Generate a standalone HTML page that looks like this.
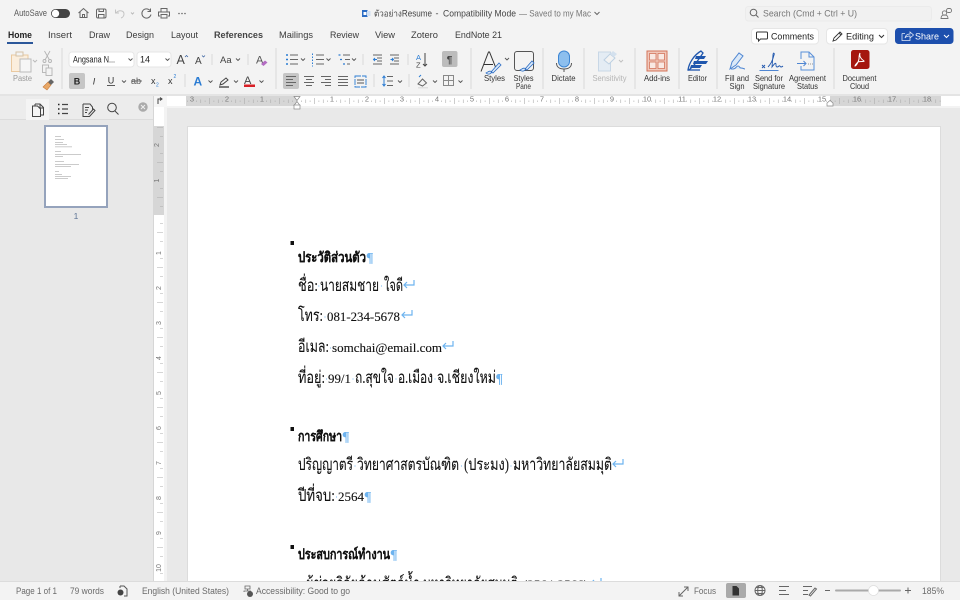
<!DOCTYPE html>
<html lang="th"><head><meta charset="utf-8"><title>Word</title>
<style>
html,body{margin:0;padding:0;background:#f3f3f3;width:960px;height:600px;overflow:hidden}
#root{position:relative;width:960px;height:600px;overflow:hidden;filter:blur(.3px)}
svg{position:absolute;left:0;top:0}
text{font-family:"Liberation Sans",sans-serif}
.s text,text.s{font-family:"Liberation Serif","Noto Serif CJK SC",serif}
</style></head><body><div id="root">
<svg width="960" height="600" viewBox="0 0 960 600">
<defs>
<pattern id="hr" x="297" y="96" width="35" height="10" patternUnits="userSpaceOnUse"><path d="M4.400 4.500v1.500M8.750 3.500v3.500M13.100 4.500v1.500M17.500 2v6M21.900 4.500v1.500M26.250 3.500v3.500M30.600 4.500v1.500" stroke="#acacac" stroke-width=".6" fill="none"/></pattern>
<pattern id="vr" x="153" y="215" width="11" height="35" patternUnits="userSpaceOnUse"><path d="M7 8.750h3M4 17.500h6M7 26.250h3" stroke="#acacac" stroke-width=".6" fill="none"/></pattern>
<path id="ret" d="M10.500 0v5H.5M3.500 2L.5 5l3 3" fill="none" stroke="#6db3ef" stroke-width="1.200"/>
</defs>
<rect width="960" height="600" fill="#f3f3f3"/>
<!-- sidebar -->
<rect x="0" y="95" width="153" height="487" fill="#e8e8e8"/>
<rect x="0" y="95" width="153" height="24" fill="#ececec"/>
<path d="M0 119.500H153" stroke="#dcdcdc"/>
<rect x="26" y="99" width="23" height="21" fill="#f4f4f4"/>
<rect x="153" y="95" width="1" height="487" fill="#d6d6d6"/>
<!-- rulers & doc bg -->
<rect x="154" y="95" width="806" height="487" fill="#f3f3f3"/>
<rect x="167" y="108" width="793" height="474" fill="#e9e9e9"/>
<rect x="154" y="96" width="806" height="10" fill="#fff"/>
<rect x="186" y="96" width="111" height="10" fill="#d6d6d6"/>
<rect x="830" y="96" width="111" height="10" fill="#d6d6d6"/>
<rect x="186" y="96" width="755" height="10" fill="url(#hr)"/>
<rect x="154" y="96" width="10" height="486" fill="#fff"/>
<rect x="154" y="126" width="10" height="89" fill="#d6d6d6"/>
<rect x="154" y="126" width="10" height="456" fill="url(#vr)"/>
<rect x="154" y="96" width="13" height="11" fill="#f6f6f6"/>
<path d="M158 104v-5h3M160 97.500l2 1.500-2 1.500" stroke="#444" stroke-width="1" fill="none"/>
<g font-size="7.500" fill="#777" text-anchor="middle">
<text x="192" y="101.500">3</text><text x="227" y="101.500">2</text><text x="262" y="101.500">1</text><text x="332" y="101.500">1</text><text x="367" y="101.500">2</text><text x="402" y="101.500">3</text><text x="437" y="101.500">4</text><text x="472" y="101.500">5</text><text x="507" y="101.500">6</text><text x="542" y="101.500">7</text><text x="577" y="101.500">8</text><text x="612" y="101.500">9</text><text x="647" y="101.500">10</text><text x="682" y="101.500">11</text><text x="717" y="101.500">12</text><text x="752" y="101.500">13</text><text x="787" y="101.500">14</text><text x="822" y="101.500">15</text><text x="857" y="101.500">16</text><text x="892" y="101.500">17</text><text x="927" y="101.500">18</text>
</g>
<g font-size="7" fill="#777" text-anchor="middle">
<text transform="translate(159,145) rotate(-90)">2</text><text transform="translate(159,180.500) rotate(-90)">1</text><text transform="translate(161,253) rotate(-90)">1</text><text transform="translate(161,288) rotate(-90)">2</text><text transform="translate(161,323) rotate(-90)">3</text><text transform="translate(161,358) rotate(-90)">4</text><text transform="translate(161,393) rotate(-90)">5</text><text transform="translate(161,428) rotate(-90)">6</text><text transform="translate(161,463) rotate(-90)">7</text><text transform="translate(161,498) rotate(-90)">8</text><text transform="translate(161,533) rotate(-90)">9</text><text transform="translate(161,568) rotate(-90)">10</text>
</g>
<path d="M294 96.500h6l-3 4zM294 105.500h6l-3-4z" fill="#fff" stroke="#888" stroke-width=".7"/>
<rect x="294" y="105" width="6" height="4" fill="#fff" stroke="#888" stroke-width=".7"/>
<path d="M827 106v-3l3-2.500 3 2.500v3z" fill="#fff" stroke="#888" stroke-width=".7"/>
<!-- page -->
<rect x="187" y="126" width="754" height="456" fill="#dcdcdc"/>
<rect x="188" y="127" width="752" height="455" fill="#fff"/>
<!-- thumbnail -->
<rect x="45" y="126" width="62" height="81" fill="#fff" stroke="#95a3bc" stroke-width="2"/>
<g fill="#b5b5b5"><rect x="55" y="136" width="6" height=".7"/><rect x="55" y="139" width="9" height=".7"/><rect x="55" y="142" width="8" height=".7"/><rect x="55" y="144" width="12" height=".7"/><rect x="55" y="146.500" width="17" height=".7"/><rect x="55" y="151" width="6" height=".7"/><rect x="55" y="154" width="26" height=".7"/><rect x="55" y="156" width="8" height=".7"/><rect x="55" y="161" width="9" height=".7"/><rect x="55" y="164" width="24" height=".7"/><rect x="55" y="166" width="16" height=".7"/><rect x="55" y="171" width="4" height=".7"/><rect x="55" y="174" width="7" height=".7"/><rect x="55" y="176" width="16" height=".7"/><rect x="55" y="178" width="13" height=".7"/></g>
<text x="76" y="219" font-size="8.500" fill="#5f7596" text-anchor="middle">1</text>
<!-- sidebar tabs -->
<g fill="none" stroke="#444" stroke-width="1">
<path d="M35 104h5l3.500 3.500v7.500h-3M40 104v4h3.500M35 104v2M32.500 106h5l3 3v7.500h-8z"/>
<path d="M62 104.500h6M62 109h6M62 113.500h6" stroke-width="1.200"/>
<path d="M58 104.500h1.500M58 109h1.500M58 113.500h1.500" stroke-width="1.600" stroke="#222"/>
<path d="M83 104h7l2.500 3v2.500M83 104v12.500h6.500l5.500-6-1.500-1.500-5 5.500M85 107.500h4M85 110h3M85 112.500h2"/>
<circle cx="112" cy="107.500" r="4.300"/><path d="M115 111l3.500 3.500"/>
</g>
<circle cx="143" cy="107" r="4.700" fill="#aaa"/><path d="M141 105l4 4M145 105l-4 4" stroke="#eee" stroke-width="1"/>
<!-- title -->
<text x="14" y="16" font-size="9" fill="#5a5a5a" textLength="33" lengthAdjust="spacingAndGlyphs">AutoSave</text>
<rect x="51" y="9" width="19" height="9" rx="4.500" fill="#444"/><circle cx="55.500" cy="13.500" r="3.700" fill="#fff"/>
<g fill="none" stroke="#666" stroke-width="1">
<path d="M78.500 13l5-4.500 5 4.500M80 12v5.500h7v-5.500M82.500 17.500v-3h2v3"/>
<rect x="96.500" y="9" width="9.500" height="9" rx="1.500"/><path d="M99 9v2.500h4.500V9M98.500 18v-3.500h5.500V18"/>
<path d="M115.500 9.500v3.500h3.500M116 13c3-3.500 8-2.500 8 1 0 2-1.500 3.500-3 4" stroke="#c4c4c4"/>
<path d="M131 12.500l1.500 1.500 1.500-1.500" stroke="#bbb"/>
<path d="M150 10.500a4.600 4.600 0 1 0 1 4M150.500 8.500v3h-3"/>
<path d="M161 12v-3.500h6V12M160 16h-1.500v-4h11v4H168M161 14.500h6V18h-6z"/>
</g>
<g fill="#666"><circle cx="179" cy="13.500" r=".8"/><circle cx="182" cy="13.500" r=".8"/><circle cx="185" cy="13.500" r=".8"/></g>
<rect x="362" y="10" width="5.500" height="7" fill="#2b6cc4"/><rect x="367" y="11" width="3.500" height="5" fill="#cfdff3"/><rect x="363.500" y="12" width="3" height="3" fill="#fff"/>
<text x="374" y="16.500" font-size="9" fill="#444" textLength="58" lengthAdjust="spacingAndGlyphs">ตัวอย่างResume</text>
<text x="435.500" y="16.500" font-size="9" fill="#444">-</text>
<text x="443" y="16.500" font-size="9.500" fill="#444" textLength="73" lengthAdjust="spacingAndGlyphs">Compatibility Mode</text>
<text x="519" y="16.500" font-size="9.500" fill="#777" textLength="72" lengthAdjust="spacingAndGlyphs">— Saved to my Mac</text>
<path d="M594.500 12l2.500 2.500 2.500-2.500" fill="none" stroke="#666"/>
<rect x="745.500" y="6.500" width="186" height="14.500" rx="3" fill="#f1f1f1" stroke="#ebebeb"/>
<circle cx="753.500" cy="12.500" r="3.300" fill="none" stroke="#666"/><path d="M756 15l2.500 2.500" stroke="#666"/>
<text x="763" y="16.500" font-size="9.500" fill="#777" textLength="94" lengthAdjust="spacingAndGlyphs">Search (Cmd + Ctrl + U)</text>
<g fill="none" stroke="#777" stroke-width=".9"><circle cx="944.500" cy="13" r="2.200"/><path d="M941 18.500c0-3 1.500-3.500 3.500-3.500s3.500.5 3.500 3.500z"/><rect x="946.500" y="8.500" width="5" height="4" rx="1.800"/></g>
<!-- tabs -->
<g font-size="9.500" fill="#3b3b3b">
<text x="8" y="38" font-weight="bold" fill="#222" textLength="24" lengthAdjust="spacingAndGlyphs">Home</text>
<text x="48" y="38" textLength="24" lengthAdjust="spacingAndGlyphs">Insert</text><text x="89" y="38" textLength="21" lengthAdjust="spacingAndGlyphs">Draw</text><text x="126" y="38" textLength="28" lengthAdjust="spacingAndGlyphs">Design</text><text x="171" y="38" textLength="27" lengthAdjust="spacingAndGlyphs">Layout</text>
<text x="214" y="38" font-weight="bold" textLength="49" lengthAdjust="spacingAndGlyphs" fill="#444">References</text>
<text x="279" y="38" textLength="34" lengthAdjust="spacingAndGlyphs">Mailings</text><text x="330" y="38" textLength="29" lengthAdjust="spacingAndGlyphs">Review</text><text x="375" y="38" textLength="20" lengthAdjust="spacingAndGlyphs">View</text><text x="411" y="38" textLength="27" lengthAdjust="spacingAndGlyphs">Zotero</text><text x="455" y="38" textLength="47" lengthAdjust="spacingAndGlyphs">EndNote 21</text>
</g>
<rect x="7" y="42" width="26" height="2" fill="#2b579a"/>
<!-- right buttons -->
<rect x="751.500" y="28.500" width="67" height="15.500" rx="3.500" fill="#fff" stroke="#e6e6e6"/>
<path d="M757.500 32h9a1 1 0 0 1 1 1v5a1 1 0 0 1-1 1h-6l-2 2v-2h-1a1 1 0 0 1-1-1v-5a1 1 0 0 1 1-1z" fill="none" stroke="#333"/>
<text x="771" y="39.500" font-size="9.500" fill="#222" textLength="43" lengthAdjust="spacingAndGlyphs">Comments</text>
<rect x="826.500" y="28.500" width="61" height="15.500" rx="3.500" fill="#fff" stroke="#e6e6e6"/>
<path d="M833 41l1-3 6-6 2 2-6 6zM839 33l2 2" fill="none" stroke="#333" stroke-width=".9"/>
<text x="846" y="39.500" font-size="9.500" fill="#222" textLength="28" lengthAdjust="spacingAndGlyphs">Editing</text>
<path d="M879 35l2.500 2.500 2.500-2.500" fill="none" stroke="#333"/>
<rect x="895" y="28" width="58.500" height="16" rx="3.500" fill="#1d4fad"/>
<path d="M902 33.500h3M910 37.500v3h-8v-7M905 38c.5-3 2.500-4 5-4v-2l3.500 3-3.500 3v-2c-2 0-4 .5-5 2z" fill="none" stroke="#dfe7f6" stroke-width=".8"/>
<text x="915" y="39.500" font-size="9.500" fill="#fff" textLength="24" lengthAdjust="spacingAndGlyphs">Share</text>
<path d="M944 35l2.500 2.500 2.500-2.500" fill="none" stroke="#fff"/>
<!-- separators -->
<path d="M62 48v41M276 48v41M471 48v41M543 48v41M584 48v41M635 48v41M679 48v41M717 48v41M834 48v41M212 54v11M248 54v11M185 74v13M363 54v11M408 54v11M374 74v13M409 74v13" stroke="#d8d8d8" fill="none"/>
<rect x="0" y="94" width="960" height="2" fill="#e4e4e4"/>
<!-- paste group -->
<path d="M11.500 55h16.500v16.500h-16.500z" fill="#fbeedd" stroke="#eac9a0"/><rect x="16" y="52" width="7" height="4" fill="#f3f3f3" stroke="#d5c1a6"/>
<rect x="20" y="59" width="11" height="13" fill="#f6f6f6" stroke="#bbb"/>
<path d="M33 60l2 2 2-2" fill="none" stroke="#bbb"/>
<text x="13" y="81" font-size="8" fill="#9a9a9a" textLength="19" lengthAdjust="spacingAndGlyphs">Paste</text>
<g fill="none" stroke="#b4b4b4" stroke-width=".9"><path d="M44.500 51l5 9M50 51l-5 9"/><circle cx="44.500" cy="61" r="1.500"/><circle cx="50" cy="61" r="1.500"/><rect x="42.500" y="65" width="6" height="7.500"/><rect x="46" y="68" width="6" height="7.500" fill="#f3f3f3"/></g>
<path d="M43 87l5-5 3 3-4 5z" fill="#e8a868" stroke="#c87a3a" stroke-width=".6"/><path d="M48 82l3-3 3 3-3 3z" fill="#666"/>
<!-- font -->
<rect x="69" y="52" width="65" height="15" rx="3" fill="#fff" stroke="#e6e6e6"/>
<text x="73" y="62.500" font-size="9" fill="#222" textLength="42" lengthAdjust="spacingAndGlyphs">Angsana N...</text>
<rect x="137" y="52" width="34" height="15" rx="3" fill="#fff" stroke="#e6e6e6"/>
<text x="140" y="62.500" font-size="9" fill="#222">14</text>
<g fill="none" stroke="#555" stroke-width=".9">
<path d="M128.500 58.500l2 2 2-2M165.500 58.500l2 2 2-2M236 58.500l2 2 2-2M122 80.500l2 2 2-2M208.500 80.500l2 2 2-2M234 80.500l2 2 2-2M259.500 80.500l2 2 2-2M301 58.500l2 2 2-2M326.500 58.500l2 2 2-2M352 58.500l2 2 2-2M398 80.500l2 2 2-2M433 80.500l2 2 2-2M458.500 80.500l2 2 2-2M505 58l2 2 2-2"/>
</g>
<text x="176.500" y="64" font-size="12.500" fill="#444">A</text><path d="M185 57l1.500-1.500 1.500 1.500" fill="none" stroke="#2b579a" stroke-width=".7"/>
<text x="195" y="64" font-size="10" fill="#444">A</text><path d="M202 55.500l1.500 1.500 1.500-1.500" fill="none" stroke="#2b579a" stroke-width=".7"/>
<text x="220" y="63" font-size="9.500" fill="#444">Aa</text>
<text x="256" y="63.500" font-size="11" fill="#555">A</text><path d="M261 64l4-3.500 2.500 2-4 3.500z" fill="#b36cc2"/>
<rect x="69" y="73" width="16" height="16" rx="2" fill="#c6c6c6"/>
<text x="77" y="84.500" font-size="9" font-weight="bold" fill="#222" text-anchor="middle">B</text>
<text x="94" y="84.500" font-size="9" font-style="italic" fill="#333" text-anchor="middle" font-family="Liberation Serif">I</text>
<text x="111" y="83.500" font-size="9" fill="#333" text-anchor="middle">U</text><path d="M107 85.500h8" stroke="#333" stroke-width=".8"/>
<text x="136" y="84" font-size="9" fill="#555" text-anchor="middle">ab</text><path d="M131 81h11" stroke="#555" stroke-width=".8"/>
<text x="151" y="84" font-size="9" fill="#333">x</text><text x="156" y="86.500" font-size="5" fill="#2b7cd3">2</text>
<text x="168" y="84" font-size="9" fill="#333">x</text><text x="173.500" y="78" font-size="5" fill="#2b7cd3">2</text>
<text x="193.500" y="85.500" font-size="12" font-weight="bold" fill="#2b7cd3">A</text>
<path d="M219 87h10" stroke="#555" stroke-width="1.500"/><path d="M220 85l1-3 5-4 2 2-5 4z" fill="none" stroke="#444"/>
<text x="244" y="84" font-size="11" fill="#444">A</text><rect x="244" y="84.500" width="11" height="2.500" fill="#d81f26"/>
<!-- paragraph -->
<rect x="283" y="73" width="16" height="16" rx="2" fill="#c6c6c6"/>
<g fill="none" stroke="#666" stroke-width=".9">
<path d="M290 55h8M290 59.500h8M290 64h8M316 55h8M316 59.500h8M316 64h8M343 55h7M345 59.500h5M347 64h3"/>
<path d="M373 55h9M377 58h5M377 61h5M373 64h9M390 55h9M394 58h5M394 61h5M390 64h9"/>
<path d="M286 76.500h10M286 79.500h7M286 82.500h10M286 85.500h7M304 76.500h10M306 79.500h6M304 82.500h10M306 85.500h6M321 76.500h10M325 79.500h6M321 82.500h10M325 85.500h6M338 76.500h10M338 79.500h10M338 82.500h10M338 85.500h10"/>
<path d="M355 76h11v11h-11z" stroke="#2b7cd3" stroke-dasharray="6 1"/><path d="M357 80h7M357 83h7" stroke="#555"/>
<path d="M387 76.500h6M387 81h6M387 85.500h6"/>
</g>
<g fill="none" stroke="#2b7cd3" stroke-width="1">
<path d="M286 55h2M286 59.500h2M286 64h2" stroke-width="1.500"/>
<path d="M312.500 53.500v13" stroke-dasharray="1.500 1.500"/>
<path d="M338.500 55h2M340 59.500h2M343 64h2" stroke-width="1.200"/>
<path d="M377 59.500h-3M375 58l-1.500 1.500 1.500 1.500M390.500 59.500h3M392 58l1.500 1.500-1.500 1.500"/>
<path d="M384 76v10M382.500 78l1.500-2 1.500 2M382.500 84l1.500 2 1.500-2"/>
</g>
<text x="416" y="60" font-size="7.500" fill="#2b7cd3">A</text><text x="416" y="67.500" font-size="7.500" fill="#444">Z</text><path d="M425 53v13M423 64l2 2 2-2" fill="none" stroke="#444"/>
<rect x="442" y="51" width="15.500" height="16" rx="2" fill="#bcbcbc"/>
<text x="449.500" y="63" font-size="10" font-weight="bold" fill="#444" text-anchor="middle">¶</text>
<path d="M418 84l4.500-5 4 4-4 3z" fill="none" stroke="#666"/><path d="M419 77l2-2" stroke="#2b7cd3"/><rect x="418" y="87" width="10" height="1.500" fill="#e0e0e0"/>
<rect x="443.500" y="75.500" width="10" height="10" fill="none" stroke="#888"/><path d="M448.500 75.500v10M443.500 80.500h10" stroke="#888"/>
<!-- styles -->
<path d="M481 71.500l7.500-19.500h1l6 15M484 64.500h9" fill="none" stroke="#333" stroke-width="1"/>
<path d="M491 72l8-9 2 2-8 8zM486 73c2-1 4-3 6-1-1 2-4 3-6 1z" fill="#dbe9f8" stroke="#2b6cc4" stroke-width=".8"/>
<rect x="514.500" y="51.500" width="19" height="19" rx="2.500" fill="none" stroke="#555"/>
<path d="M525 69l7-8 2 2-7 7zM520 70c2-1 4-3 6-1-1 2-4 3-6 1z" fill="#dbe9f8" stroke="#2b6cc4" stroke-width=".8"/>
<g font-size="8.200" fill="#333">
<text x="484" y="81" textLength="21" lengthAdjust="spacingAndGlyphs">Styles</text><text x="513.500" y="81" textLength="20" lengthAdjust="spacingAndGlyphs">Styles</text><text x="516" y="89" textLength="15" lengthAdjust="spacingAndGlyphs">Pane</text>
<text x="551.500" y="81" textLength="24" lengthAdjust="spacingAndGlyphs">Dictate</text><text x="644" y="81" textLength="26" lengthAdjust="spacingAndGlyphs">Add-ins</text><text x="688" y="81" textLength="19" lengthAdjust="spacingAndGlyphs">Editor</text>
<text x="725" y="81" textLength="24" lengthAdjust="spacingAndGlyphs">Fill and</text><text x="729.500" y="89" textLength="15" lengthAdjust="spacingAndGlyphs">Sign</text>
<text x="755" y="81" textLength="28" lengthAdjust="spacingAndGlyphs">Send for</text><text x="753" y="89" textLength="32" lengthAdjust="spacingAndGlyphs">Signature</text>
<text x="789" y="81" textLength="37" lengthAdjust="spacingAndGlyphs">Agreement</text><text x="797" y="89" textLength="21" lengthAdjust="spacingAndGlyphs">Status</text>
<text x="842.500" y="81" textLength="34" lengthAdjust="spacingAndGlyphs">Document</text><text x="850" y="89" textLength="19" lengthAdjust="spacingAndGlyphs">Cloud</text>
<text x="592.500" y="81" fill="#b4b4b4" textLength="34" lengthAdjust="spacingAndGlyphs">Sensitivity</text>
</g>
<!-- dictate -->
<rect x="558.500" y="51" width="11" height="16" rx="5.500" fill="#8dbfee" stroke="#3d86d4"/>
<path d="M556.500 63c0 4 3 6 7.500 6s7.500-2 7.500-6M564 69v3" fill="none" stroke="#555"/>
<!-- sensitivity -->
<path d="M598.500 52h12v19h-12z" fill="#e4ecf4" stroke="#c8d7e6"/><path d="M604 60l6-6 5 4-6 6z" fill="#f3f3f3" stroke="#bcd0e2"/><path d="M610 54l3-3 4 3-3 3z" fill="#d4e1ee"/>
<path d="M619 60l2 2 2-2" fill="none" stroke="#c0c0c0"/>
<!-- add-ins -->
<rect x="647" y="51" width="20" height="20" fill="#f0c9bc" stroke="#d4745a"/><rect x="649.500" y="53.500" width="6.500" height="6.500" fill="#f9e9e3" stroke="#d4745a" stroke-width=".8"/><rect x="658" y="53.500" width="6.500" height="6.500" fill="#f9e9e3" stroke="#d4745a" stroke-width=".8"/><rect x="649.500" y="62" width="6.500" height="6.500" fill="#f9e9e3" stroke="#d4745a" stroke-width=".8"/><rect x="658" y="62" width="6.500" height="6.500" fill="#f9e9e3" stroke="#d4745a" stroke-width=".8"/>
<!-- editor -->
<path d="M688 70c1-7 6-15 13-19l2 2c-4 6-8 12-14 17z" fill="#f3f3f3" stroke="#1f56ad" stroke-width="1.300"/><path d="M688 70h12" stroke="#1f56ad" stroke-width="1.300"/><path d="M696 56h10l-2 3h-9zM694 61h14l-2 3h-13zM691 65h11l-2 3h-10z" fill="#1f56ad"/>
<!-- fill & sign -->
<path d="M730 69l2-7 7-9 4 3-7 9-6 4zM731 69h2c3 0 3-3 5-3s1 2 3 2 3 1 4 1" fill="#dbe9f8" stroke="#4f86d2"/>
<!-- send for signature -->
<path d="M762 65l3 3M765 65l-3 3" stroke="#1f56ad" stroke-width=".9"/><path d="M768 67c3-3 5-8 6-12 1-2-1-3-1 0l-1 12c3-4 4-5 4-2s2 2 3 1 1 1 2 1 2-1 2-1" fill="none" stroke="#1f56ad" stroke-width=".9"/><path d="M759.500 70.500h19" stroke="#4f86d2"/>
<!-- agreement -->
<path d="M801 59v-7h8l5 5v13h-13v-4" fill="none" stroke="#5a90d8"/><path d="M809 52v5h5" fill="none" stroke="#5a90d8"/><path d="M797 63.500h9M803.500 61l2.500 2.500-2.500 2.500" fill="none" stroke="#4f86d2"/><path d="M808 64h1M810 64h1M812 64h1" stroke="#777" stroke-width=".7"/>
<!-- pdf -->
<rect x="851" y="50" width="18.500" height="19" rx="2.500" fill="#a5160e"/>
<path d="M860 53c-1 3 1 6 4 8 1 1-4 0-6 1-1 1-3 3-3 4 1 0 3-3 4-7 0-2 0-4 1-6z" fill="none" stroke="#fff" stroke-width="1"/>
<!-- document -->
<g fill="#111"><rect x="290.500" y="241" width="3.500" height="4"/><rect x="290.500" y="427" width="3.500" height="4"/><rect x="290.500" y="545" width="3.500" height="4"/></g>
<g class="s" fill="#111" font-size="17" stroke="#111" stroke-width=".12">
<text x="298" y="262" font-size="14" font-weight="bold" textLength="68" lengthAdjust="spacingAndGlyphs">ประวัติส่วนตัว</text>
<text x="298" y="291" textLength="20" lengthAdjust="spacingAndGlyphs">ชื่อ:</text><text x="320" y="291" textLength="59" lengthAdjust="spacingAndGlyphs">นายสมชาย</text><text x="384" y="291" textLength="19" lengthAdjust="spacingAndGlyphs">ใจดี</text>
<text x="298" y="321" textLength="25" lengthAdjust="spacingAndGlyphs">โทร:</text><text x="327" y="321" font-size="13" textLength="73" lengthAdjust="spacingAndGlyphs">081-234-5678</text>
<text x="298" y="352" textLength="31" lengthAdjust="spacingAndGlyphs">อีเมล:</text><text x="332" y="352" font-size="13" textLength="110" lengthAdjust="spacingAndGlyphs">somchai@email.com</text>
<text x="298" y="383" textLength="27" lengthAdjust="spacingAndGlyphs">ที่อยู่:</text><text x="328" y="383" font-size="13" textLength="23" lengthAdjust="spacingAndGlyphs">99/1</text><text x="355" y="383" textLength="39" lengthAdjust="spacingAndGlyphs">ถ.สุขใจ</text><text x="398" y="383" textLength="35" lengthAdjust="spacingAndGlyphs">อ.เมือง</text><text x="437" y="383" textLength="59" lengthAdjust="spacingAndGlyphs">จ.เชียงใหม่</text>
<text x="298" y="441" font-size="14" font-weight="bold" textLength="44" lengthAdjust="spacingAndGlyphs">การศึกษา</text>
<text x="298" y="470" textLength="55" lengthAdjust="spacingAndGlyphs">ปริญญาตรี</text><text x="357" y="470" textLength="102" lengthAdjust="spacingAndGlyphs">วิทยาศาสตรบัณฑิต</text><text x="464" y="470" textLength="45" lengthAdjust="spacingAndGlyphs">(ประมง)</text><text x="513" y="470" textLength="99" lengthAdjust="spacingAndGlyphs">มหาวิทยาลัยสมมุติ</text>
<text x="298" y="501" textLength="37" lengthAdjust="spacingAndGlyphs">ปีที่จบ:</text><text x="338" y="501" font-size="13" textLength="26" lengthAdjust="spacingAndGlyphs">2564</text>
<text x="298" y="559" font-size="14" font-weight="bold" textLength="92" lengthAdjust="spacingAndGlyphs">ประสบการณ์ทำงาน</text>
<text x="306" y="589" textLength="114" lengthAdjust="spacingAndGlyphs">ผู้ช่วยวิจัยด้านสัตว์น้ำ</text><text x="423" y="589" textLength="95" lengthAdjust="spacingAndGlyphs">มหาวิทยาลัยสมมุติ</text><text x="523" y="589" font-size="13" textLength="65" lengthAdjust="spacingAndGlyphs">(2564-2566)</text>
</g>
<g class="s" fill="#6db3ef" font-size="14" font-weight="bold">
<text x="366" y="262">¶</text><text x="495.500" y="383">¶</text><text x="342" y="441">¶</text><text x="364" y="501">¶</text><text x="390" y="559">¶</text>
</g>
<g fill="#7fbcf0"><circle cx="318.800" cy="286" r=".6"/><circle cx="381.500" cy="286" r=".6"/><circle cx="325" cy="317" r=".6"/><circle cx="330.500" cy="348" r=".6"/><circle cx="326.500" cy="379" r=".6"/><circle cx="353" cy="379" r=".6"/><circle cx="396" cy="379" r=".6"/><circle cx="435" cy="379" r=".6"/><circle cx="355" cy="466" r=".6"/><circle cx="461.500" cy="466" r=".6"/><circle cx="511" cy="466" r=".6"/><circle cx="336.500" cy="497" r=".6"/></g>
<use href="#ret" x="403.500" y="280"/><use href="#ret" x="401.500" y="310"/><use href="#ret" x="442.500" y="341"/><use href="#ret" x="612.500" y="459"/><use href="#ret" x="590.500" y="578"/>
<!-- status bar -->
<rect x="0" y="582" width="960" height="18" fill="#f3f3f3"/><path d="M0 581.500H960" stroke="#dcdcdc"/>
<g font-size="9" fill="#6a6a6a">
<text x="16" y="594" textLength="41" lengthAdjust="spacingAndGlyphs">Page 1 of 1</text><text x="70" y="594" textLength="34" lengthAdjust="spacingAndGlyphs">79 words</text><text x="142" y="594" textLength="87" lengthAdjust="spacingAndGlyphs">English (United States)</text><text x="256" y="594" textLength="94" lengthAdjust="spacingAndGlyphs">Accessibility: Good to go</text><text x="694" y="594" textLength="22" lengthAdjust="spacingAndGlyphs">Focus</text><text x="922" y="594" textLength="22" lengthAdjust="spacingAndGlyphs">185%</text>
</g>
<path d="M120 586h4l3 3v7h-3M120 586v2" fill="none" stroke="#555"/><circle cx="120.500" cy="592.500" r="3" fill="#444"/>
<path d="M245 586h5v3h-5zM247.500 589v2M244 592v-1h7" fill="none" stroke="#666" stroke-width=".8"/><circle cx="250" cy="594" r="3" fill="#555"/>
<path d="M679 596l9-9M679 592v4h4M684 587h4v4" fill="none" stroke="#666"/>
<rect x="726" y="583" width="20" height="15" rx="2" fill="#aaa"/><path d="M732.500 586h4l2.500 2.500v7h-6.500z" fill="#333"/>
<g fill="none" stroke="#666"><circle cx="760" cy="590.500" r="5"/><ellipse cx="760" cy="590.500" rx="2.300" ry="5"/><path d="M755 590.500h10M756 587.500h8M756 593.500h8"/>
<path d="M779 586.500h10M779 590.500h7M779 594.500h10"/>
<path d="M803 586.500h9M803 590.500h5M803 594.500h5M809 595l6-7 1.500 1-6 7z"/></g>
<path d="M825 590.500h5M905 590.500h6M908 587.500v6" stroke="#666"/>
<rect x="835" y="589.500" width="66" height="2" rx="1" fill="#aaa"/>
<circle cx="873.500" cy="590.500" r="5" fill="#fff" stroke="#ddd" stroke-width=".7"/>
</svg>
</div></body></html>
